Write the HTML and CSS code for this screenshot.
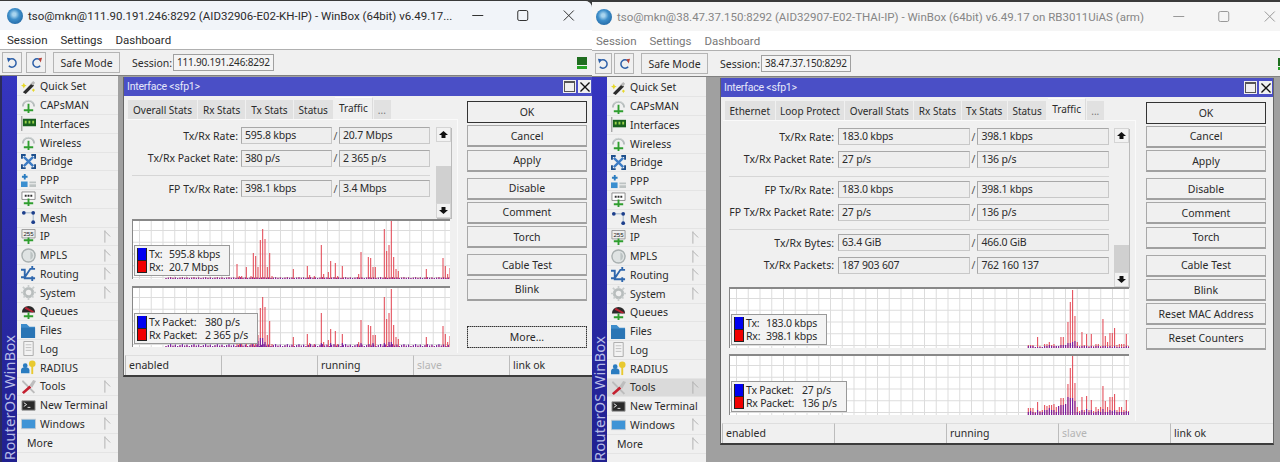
FILE: index.html
```html
<!DOCTYPE html>
<html lang="en">
<head>
  <meta charset="UTF-8">
  <title>WinBox - sfp1 traffic</title>
  <link rel="stylesheet" href="styles.css">
</head>
<body>
  <!-- icons used by both windows -->
  <svg class="defs" aria-hidden="true">
    <symbol id="i-quick" viewBox="0 0 16 16"><path d="M2 14 11 5l3 2-9 9z" fill="#2c2c2c"/><path d="M10 5l3-3 2 2-2 3z" fill="#b9b9b9"/><path d="M3 4l1 2 2 1-2 1-1 2-1-2-2-1 2-1zM13 10l1 1 1 1-1 .5-1 1.500-.5-1.500-1-.5 1-1z" fill="#e6d82a"/></symbol>
    <symbol id="i-wifi" viewBox="0 0 16 16"><path d="M2 9a6 6 0 0 1 12 0" fill="none" stroke="#b5bcbc" stroke-width="2"/><path d="M3 4.500a7 7 0 0 1 10 0" fill="none" stroke="#d5d9d9"/><path d="M7 6h2v6H7zM3 12h10v2H3zM7 11h2v5H7z" fill="#2f9e2f"/></symbol>
    <symbol id="i-iface" viewBox="0 0 16 16"><path d="M0 0h1.500v16H0z" fill="#a8a8a8"/><path d="M2 3h14v8H2z" fill="#17601d"/><path d="M4 5h2v3H4zM8 5h2v3H8zM12 5h2v3h-2z" fill="#9ad14a"/></symbol>
    <symbol id="i-bridge" viewBox="0 0 16 16"><path d="M3 3l10 10M13 3 3 13" stroke="#3d7cc4" stroke-width="2.500"/><path d="M0 0h5v2H2v3H0zM11 0h5v5h-2V2h-3zM0 11h2v3h3v2H0zM14 11h2v5h-5v-2h3z" fill="#1d4f8c"/></symbol>
    <symbol id="i-ppp" viewBox="0 0 16 16"><path d="M3 1h2v2h2v2H5v2H3V5H1V3h2z" fill="#2a7cc0"/><path d="M0 9h7v6H0z" fill="#3b8fd0"/><path d="M9 9h7v2H9zM9 12h7v3H9z" fill="#bdc3c3"/></symbol>
    <symbol id="i-switch" viewBox="0 0 16 16"><path d="M1 1h14v8H1z" fill="#fff" stroke="#8b8b8b"/><path d="M4 4h2v2H4zM7 4h2v2H7zM10 4h2v2h-2z" fill="#333"/><path d="M7 8h2v8H7zM3 12h10v2H3z" fill="#2f9e2f"/></symbol>
    <symbol id="i-mesh" viewBox="0 0 16 16"><path d="M3 3h10v10" fill="none" stroke="#9bb0c8"/><circle cx="3" cy="3" r="2" fill="#1d3f8c"/><circle cx="13" cy="3" r="2" fill="#1d3f8c"/><circle cx="13" cy="13" r="2" fill="#1d3f8c"/></symbol>
    <symbol id="i-ip" viewBox="0 0 16 16"><path d="M1 .500h14v9H1z" fill="#eee" stroke="#999"/><text x="8" y="7.500" font-size="6.500" font-family="Liberation Sans" text-anchor="middle" fill="#222">255</text><path d="M7 9h2v7H7zM3 11h10v2H3z" fill="#2f9e2f"/></symbol>
    <symbol id="i-mpls" viewBox="0 0 16 16"><circle cx="8" cy="8" r="7" fill="#dfe3e3" stroke="#a9b0b0" stroke-width="1.500"/><path d="M10 3.500a5 5 0 0 1 0 9z" fill="#bcc3c3"/></symbol>
    <symbol id="i-route" viewBox="0 0 16 16"><path d="M0 12h4l6-9h5M0 4h4v9h11M12 0v4M12 11v5" fill="none" stroke="#2f67ad" stroke-width="2"/></symbol>
    <symbol id="i-gear" viewBox="0 0 16 16"><circle cx="8" cy="8" r="4.500" fill="none" stroke="#b8bdbd" stroke-width="3"/><path d="M8 0v16M0 8h16M2 2l12 12M14 2 2 14" stroke="#c8cccc" stroke-width="1.800" stroke-dasharray="3 10"/></symbol>
    <symbol id="i-queue" viewBox="0 0 16 16"><path d="M1 9a7 7 0 0 1 14 0z" fill="#2a2a2a"/><path d="M5 3l9 5-2 1-8-4z" fill="#b82233"/><path d="M7 9h2v7H7zM3 12h10v2H3z" fill="#2f9e2f"/></symbol>
    <symbol id="i-files" viewBox="0 0 16 16"><path d="M0 1h6l3 3h6v12H0z" fill="#3d8ccb"/><path d="M0 5h15v11H0z" fill="#2a75b5"/></symbol>
    <symbol id="i-log" viewBox="0 0 16 16"><path d="M3 .500h10v15H3z" fill="#f3f3f3" stroke="#aaa"/><path d="M5 4h6M5 7h6M5 10h6" stroke="#c0c0c0"/></symbol>
    <symbol id="i-radius" viewBox="0 0 16 16"><circle cx="4.500" cy="6" r="2.500" fill="#2a7cc0"/><path d="M0 14v-3a4 3 0 0 1 9 0v3z" fill="#2a7cc0"/><circle cx="12" cy="4" r="3.500" fill="#e8c930"/><path d="M11 6h2v9h-2z" fill="#e8c930"/></symbol>
    <symbol id="i-tools" viewBox="0 0 16 16"><path d="M2 1 15 14l-1.500 1.500L1 3z" fill="#bbb"/><path d="M9 7l2 2-8 7-2-2z" fill="#c4202f"/><path d="M9 7l4-6 3 1-4 7z" fill="#bdbdbd"/></symbol>
    <symbol id="i-term" viewBox="0 0 16 16"><path d="M1 3h14v10H1z" fill="#2a2a2a" stroke="#999"/><path d="M3 5l3 2-3 2M7 10h3" fill="none" stroke="#eee"/></symbol>
    <symbol id="i-win" viewBox="0 0 16 16"><path d="M0 3h16v11H0z" fill="#c4ccd4"/><path d="M1 4h14v9H1z" fill="#3f94d6"/></symbol>
    <symbol id="i-sub" viewBox="0 0 8 14"><path d="M1 0v14M1 1l6 6" fill="none" stroke="#aaa"/></symbol>
    <symbol id="i-undo" viewBox="0 0 14 14"><path d="M3 4.500a4.500 4.500 0 1 1 0 6" fill="none" stroke="#2c5fa8" stroke-width="1.600"/><path d="M1 2l4 .5L2.500 7z" fill="#2c5fa8"/></symbol>
    <symbol id="i-redo" viewBox="0 0 14 14"><path d="M11 4.500a4.500 4.500 0 1 0 0 6" fill="none" stroke="#2c5fa8" stroke-width="1.600"/><path d="M13 2l-4 .5L11.500 7z" fill="#b8443a"/></symbol>
    <symbol id="i-up" viewBox="0 0 9 9"><path d="M4.500 1 9 5H6.500v3h-4V5H0z" fill="#111"/></symbol>
    <symbol id="i-down" viewBox="0 0 9 9"><path d="M4.500 8 9 4H6.500V1h-4v3H0z" fill="#111"/></symbol>
    <symbol id="i-min" viewBox="0 0 11 11"><path d="M0 5.500h11" stroke="currentColor"/></symbol>
    <symbol id="i-max" viewBox="0 0 11 11"><rect x=".5" y=".5" width="10" height="10" rx="1.500" fill="none" stroke="currentColor"/></symbol>
    <symbol id="i-close" viewBox="0 0 11 11"><path d="M.5.500l10 10M10.500.500l-10 10" stroke="currentColor"/></symbol>
  </svg>

  <main class="desktop">
    <!-- first router -->
    <section class="win win-a">
      <header class="titlebar">
        <span class="logo"></span>
        <span class="title">tso@mkn@111.90.191.246:8292 (AID32906-E02-KH-IP) - WinBox (64bit) v6.49.17...</span>
        <span class="ctrls">
          <svg class="ctrl"><use href="#i-min"/></svg>
          <svg class="ctrl"><use href="#i-max"/></svg>
          <svg class="ctrl"><use href="#i-close"/></svg>
        </span>
      </header>
      <nav class="menubar"><span>Session</span><span>Settings</span><span>Dashboard</span></nav>
      <div class="toolbar">
        <button class="tool"><svg class="tool-ic"><use href="#i-undo"/></svg></button>
        <button class="tool"><svg class="tool-ic"><use href="#i-redo"/></svg></button>
        <button class="tool safe">Safe Mode</button>
        <span class="sess-label">Session:</span>
        <span class="sess-val">111.90.191.246:8292</span>
        <span class="led"></span>
      </div>
      <div class="main">
        <aside class="side">
          <div class="brand"><span>RouterOS WinBox</span></div>
          <ul class="menu">
            <li><svg class="ic"><use href="#i-quick"/></svg>Quick Set</li>
            <li><svg class="ic"><use href="#i-wifi"/></svg>CAPsMAN</li>
            <li><svg class="ic"><use href="#i-iface"/></svg>Interfaces</li>
            <li><svg class="ic"><use href="#i-wifi"/></svg>Wireless</li>
            <li><svg class="ic"><use href="#i-bridge"/></svg>Bridge</li>
            <li><svg class="ic"><use href="#i-ppp"/></svg>PPP</li>
            <li><svg class="ic"><use href="#i-switch"/></svg>Switch</li>
            <li><svg class="ic"><use href="#i-mesh"/></svg>Mesh</li>
            <li><svg class="ic"><use href="#i-ip"/></svg>IP<svg class="sub"><use href="#i-sub"/></svg></li>
            <li><svg class="ic"><use href="#i-mpls"/></svg>MPLS<svg class="sub"><use href="#i-sub"/></svg></li>
            <li><svg class="ic"><use href="#i-route"/></svg>Routing<svg class="sub"><use href="#i-sub"/></svg></li>
            <li><svg class="ic"><use href="#i-gear"/></svg>System<svg class="sub"><use href="#i-sub"/></svg></li>
            <li><svg class="ic"><use href="#i-queue"/></svg>Queues</li>
            <li><svg class="ic"><use href="#i-files"/></svg>Files</li>
            <li><svg class="ic"><use href="#i-log"/></svg>Log</li>
            <li><svg class="ic"><use href="#i-radius"/></svg>RADIUS</li>
            <li><svg class="ic"><use href="#i-tools"/></svg>Tools<svg class="sub"><use href="#i-sub"/></svg></li>
            <li><svg class="ic"><use href="#i-term"/></svg>New Terminal</li>
            <li><svg class="ic"><use href="#i-win"/></svg>Windows<svg class="sub"><use href="#i-sub"/></svg></li>
            <li class="more">More<svg class="sub"><use href="#i-sub"/></svg></li>
          </ul>
        </aside>
        <div class="workspace">
          <div class="dialog">
            <div class="dlg-title">
              <span>Interface &lt;sfp1&gt;</span>
              <span class="dlg-btn"><i class="dlg-box"></i></span>
              <span class="dlg-btn"><svg class="dlg-x"><use href="#i-close"/></svg></span>
            </div>
            <div class="dlg-body">
              <div class="left">
                <div class="tabs">
                  <span class="tab">Overall Stats</span>
                  <span class="tab">Rx Stats</span>
                  <span class="tab">Tx Stats</span>
                  <span class="tab">Status</span>
                  <span class="tab active">Traffic</span>
                  <span class="tab dots">...</span>
                </div>
                <div class="panel">
                  <div class="stats">
                    <div class="fields">
                      <div class="row"><label>Tx/Rx Rate:</label><span class="val">595.8 kbps</span><span class="slash">/</span><span class="val">20.7 Mbps</span></div>
                      <div class="row"><label>Tx/Rx Packet Rate:</label><span class="val">380 p/s</span><span class="slash">/</span><span class="val">2 365 p/s</span></div>
                      <hr class="sep">
                      <div class="row"><label>FP Tx/Rx Rate:</label><span class="val">398.1 kbps</span><span class="slash">/</span><span class="val">3.4 Mbps</span></div>
                    </div>
                    <div class="scroll">
                      <span class="sb-btn"><svg class="sb-ic"><use href="#i-up"/></svg></span>
                      <span class="sb-track"></span>
                      <span class="sb-thumb"></span>
                      <span class="sb-btn"><svg class="sb-ic"><use href="#i-down"/></svg></span>
                    </div>
                  </div>
                  <div class="charts">
                    <div class="chart chart-top">
                      <svg class="plot" data-chart="a-rate"></svg>
                      <div class="legend">
                        <i class="sw tx"></i><span class="lg-name">Tx:</span><span>595.8 kbps</span>
                        <i class="sw rx"></i><span class="lg-name">Rx:</span><span>20.7 Mbps</span>
                      </div>
                    </div>
                    <div class="chart">
                      <svg class="plot" data-chart="a-pkt"></svg>
                      <div class="legend wide">
                        <i class="sw tx"></i><span class="lg-name">Tx Packet:</span><span>380 p/s</span>
                        <i class="sw rx"></i><span class="lg-name">Rx Packet:</span><span>2 365 p/s</span>
                      </div>
                    </div>
                  </div>
                </div>
              </div>
              <div class="actions">
                <button class="btn primary">OK</button>
                <button class="btn">Cancel</button>
                <button class="btn">Apply</button>
                <button class="btn group">Disable</button>
                <button class="btn">Comment</button>
                <button class="btn">Torch</button>
                <button class="btn group2">Cable Test</button>
                <button class="btn">Blink</button>
                <button class="btn focus">More...</button>
              </div>
            </div>
            <div class="status">
              <span>enabled</span><span></span><span>running</span><span class="off">slave</span><span>link ok</span>
            </div>
          </div>
        </div>
      </div>
    </section>

    <!-- second router, window not focused -->
    <section class="win win-b">
      <header class="titlebar">
        <span class="logo"></span>
        <span class="title">tso@mkn@38.47.37.150:8292 (AID32907-E02-THAI-IP) - WinBox (64bit) v6.49.17 on RB3011UiAS (arm)</span>
        <span class="ctrls">
          <svg class="ctrl"><use href="#i-min"/></svg>
          <svg class="ctrl"><use href="#i-max"/></svg>
          <svg class="ctrl"><use href="#i-close"/></svg>
        </span>
      </header>
      <nav class="menubar"><span>Session</span><span>Settings</span><span>Dashboard</span></nav>
      <div class="toolbar">
        <button class="tool"><svg class="tool-ic"><use href="#i-undo"/></svg></button>
        <button class="tool"><svg class="tool-ic"><use href="#i-redo"/></svg></button>
        <button class="tool safe">Safe Mode</button>
        <span class="sess-label">Session:</span>
        <span class="sess-val">38.47.37.150:8292</span>
        <span class="led"></span>
      </div>
      <div class="main">
        <aside class="side">
          <div class="brand"><span>RouterOS WinBox</span></div>
          <ul class="menu">
            <li><svg class="ic"><use href="#i-quick"/></svg>Quick Set</li>
            <li><svg class="ic"><use href="#i-wifi"/></svg>CAPsMAN</li>
            <li><svg class="ic"><use href="#i-iface"/></svg>Interfaces</li>
            <li><svg class="ic"><use href="#i-wifi"/></svg>Wireless</li>
            <li><svg class="ic"><use href="#i-bridge"/></svg>Bridge</li>
            <li><svg class="ic"><use href="#i-ppp"/></svg>PPP</li>
            <li><svg class="ic"><use href="#i-switch"/></svg>Switch</li>
            <li><svg class="ic"><use href="#i-mesh"/></svg>Mesh</li>
            <li><svg class="ic"><use href="#i-ip"/></svg>IP<svg class="sub"><use href="#i-sub"/></svg></li>
            <li><svg class="ic"><use href="#i-mpls"/></svg>MPLS<svg class="sub"><use href="#i-sub"/></svg></li>
            <li><svg class="ic"><use href="#i-route"/></svg>Routing<svg class="sub"><use href="#i-sub"/></svg></li>
            <li><svg class="ic"><use href="#i-gear"/></svg>System<svg class="sub"><use href="#i-sub"/></svg></li>
            <li><svg class="ic"><use href="#i-queue"/></svg>Queues</li>
            <li><svg class="ic"><use href="#i-files"/></svg>Files</li>
            <li><svg class="ic"><use href="#i-log"/></svg>Log</li>
            <li><svg class="ic"><use href="#i-radius"/></svg>RADIUS</li>
            <li class="hover"><svg class="ic"><use href="#i-tools"/></svg>Tools<svg class="sub"><use href="#i-sub"/></svg></li>
            <li><svg class="ic"><use href="#i-term"/></svg>New Terminal</li>
            <li><svg class="ic"><use href="#i-win"/></svg>Windows<svg class="sub"><use href="#i-sub"/></svg></li>
            <li class="more">More<svg class="sub"><use href="#i-sub"/></svg></li>
          </ul>
        </aside>
        <div class="workspace">
          <div class="dialog">
            <div class="dlg-title">
              <span>Interface &lt;sfp1&gt;</span>
              <span class="dlg-btn"><i class="dlg-box"></i></span>
              <span class="dlg-btn"><svg class="dlg-x"><use href="#i-close"/></svg></span>
            </div>
            <div class="dlg-body">
              <div class="left">
                <div class="tabs">
                  <span class="tab">Ethernet</span>
                  <span class="tab">Loop Protect</span>
                  <span class="tab">Overall Stats</span>
                  <span class="tab">Rx Stats</span>
                  <span class="tab">Tx Stats</span>
                  <span class="tab">Status</span>
                  <span class="tab active">Traffic</span>
                  <span class="tab dots">...</span>
                </div>
                <div class="panel">
                  <div class="stats">
                    <div class="fields">
                      <div class="row"><label>Tx/Rx Rate:</label><span class="val">183.0 kbps</span><span class="slash">/</span><span class="val">398.1 kbps</span></div>
                      <div class="row"><label>Tx/Rx Packet Rate:</label><span class="val">27 p/s</span><span class="slash">/</span><span class="val">136 p/s</span></div>
                      <hr class="sep">
                      <div class="row"><label>FP Tx/Rx Rate:</label><span class="val">183.0 kbps</span><span class="slash">/</span><span class="val">398.1 kbps</span></div>
                      <div class="row"><label>FP Tx/Rx Packet Rate:</label><span class="val">27 p/s</span><span class="slash">/</span><span class="val">136 p/s</span></div>
                      <hr class="sep">
                      <div class="row"><label>Tx/Rx Bytes:</label><span class="val">63.4 GiB</span><span class="slash">/</span><span class="val">466.0 GiB</span></div>
                      <div class="row"><label>Tx/Rx Packets:</label><span class="val">187 903 607</span><span class="slash">/</span><span class="val">762 160 137</span></div>
                    </div>
                    <div class="scroll">
                      <span class="sb-btn"><svg class="sb-ic"><use href="#i-up"/></svg></span>
                      <span class="sb-track"></span>
                      <span class="sb-thumb"></span>
                      <span class="sb-btn"><svg class="sb-ic"><use href="#i-down"/></svg></span>
                    </div>
                  </div>
                  <div class="charts">
                    <div class="chart chart-top">
                      <svg class="plot" data-chart="b-rate"></svg>
                      <div class="legend">
                        <i class="sw tx"></i><span class="lg-name">Tx:</span><span>183.0 kbps</span>
                        <i class="sw rx"></i><span class="lg-name">Rx:</span><span>398.1 kbps</span>
                      </div>
                    </div>
                    <div class="chart">
                      <svg class="plot" data-chart="b-pkt"></svg>
                      <div class="legend wide">
                        <i class="sw tx"></i><span class="lg-name">Tx Packet:</span><span>27 p/s</span>
                        <i class="sw rx"></i><span class="lg-name">Rx Packet:</span><span>136 p/s</span>
                      </div>
                    </div>
                  </div>
                </div>
              </div>
              <div class="actions">
                <button class="btn primary">OK</button>
                <button class="btn">Cancel</button>
                <button class="btn">Apply</button>
                <button class="btn group">Disable</button>
                <button class="btn">Comment</button>
                <button class="btn">Torch</button>
                <button class="btn group2">Cable Test</button>
                <button class="btn">Blink</button>
                <button class="btn">Reset MAC Address</button>
                <button class="btn">Reset Counters</button>
              </div>
            </div>
            <div class="status">
              <span>enabled</span><span></span><span>running</span><span class="off">slave</span><span>link ok</span>
            </div>
          </div>
        </div>
      </div>
    </section>
  </main>
  <script src="charts.js"></script>
</body>
</html>
```
FILE: styles.css
```css
* {
  box-sizing: border-box;
}

html, body {
  margin: 0;
  height: 100%;
  overflow: hidden;
}

body {
  background: #3a3a3a;
  font-family: "Noto Sans", "Liberation Sans", sans-serif;
  font-size: 10.5px;
  color: #2b2b2b;
}

.defs {
  position: absolute;
  width: 0;
  height: 0;
}

.desktop {
  display: flex;
  height: 462px;
  align-items: flex-start;
}

.win {
  height: 462px;
  overflow: hidden;
  display: flex;
  flex-direction: column;
  background: #f0f0f0;
}
.win-a {
  width: 592px;
  margin-top: 1px;
  border-top-right-radius: 7px;
}
.win-b {
  width: 688px;
  margin-top: 2px;
}

/* title bar */
.titlebar {
  height: 29px;
  flex: none;
  display: flex;
  align-items: center;
  background: #f1f4f9;
  font-family: Roboto, "Liberation Sans", sans-serif;
  font-size: 11.5px;
  white-space: nowrap;
}
.win-a .titlebar {
  padding-left: 7px;
}
.win-b .titlebar {
  padding-left: 4px;
  background: #f5f5f5;
  color: #868686;
}
.logo {
  width: 16px;
  height: 16px;
  border-radius: 50%;
  margin-right: 5px;
  flex: none;
  background: radial-gradient(circle at 45% 40%, #a8d4ee 0 12%, #3f8fca 40%, #1c5f9c 90%);
}
.ctrls {
  margin-left: auto;
  display: flex;
  flex: none;
  color: #333;
}
.win-a .ctrls {
  margin-right: 1px;
}
.win-b .ctrls {
  margin-right: -12px;
  color: #999;
}
.ctrl {
  width: 45.5px;
  height: 11px;
}

/* menu and tool bars */
.menubar {
  height: 20px;
  flex: none;
  display: flex;
  align-items: center;
  gap: 13px;
  padding-left: 7px;
  background: #fff;
  border-bottom: 1px solid #b0b0b0;
  font-family: Roboto, "Liberation Sans", sans-serif;
  font-size: 11.5px;
}
.win-b .menubar {
  padding-left: 4px;
  color: #777;
}

.toolbar {
  height: 26px;
  flex: none;
  display: flex;
  align-items: center;
  padding-left: 2px;
  border-bottom: 1px solid #808080;
  overflow: hidden;
}
.tool {
  height: 21px;
  width: 20px;
  padding: 0;
  margin-right: 4px;
  display: flex;
  align-items: center;
  justify-content: center;
  background: #f0f0f0;
  border: 1px solid #b4b4b4;
  font: inherit;
  color: inherit;
}
.win-b .tool:first-child {
  width: 17px;
  margin: 0 2px 0 1px;
}
.tool-ic {
  width: 13px;
  height: 13px;
}
.safe {
  width: 67px;
  margin-left: 3px;
}
.sess-label {
  margin-left: 8px;
  width: 41px;
}
.sess-val {
  height: 17px;
  padding: 0 3px;
  line-height: 15px;
  border: 1px solid #a0a0a0;
  background: #f4f4f4;
  white-space: nowrap;
  font-size: 10px;
  letter-spacing: -.2px;
}
.led {
  margin-left: auto;
  margin-right: 5px;
  width: 10px;
  height: 12px;
  background: linear-gradient(#1f6d1f 0 8px, #f0f0f0 8px 9px, #26a326 9px);
}
.win-b .led {
  margin-right: -8px;
}

.main {
  flex: 1;
  min-height: 0;
  display: flex;
}

/* left menu */
.side {
  flex: none;
  display: flex;
  background: #f0f0f0;
}
.brand {
  width: 17px;
  display: flex;
  align-items: flex-end;
  justify-content: center;
  padding: 0 0 3px;
  border-left: 2px solid #2b2b5c;
  background: linear-gradient(#3535c0, #20208f);
  color: #b6bce6;
}
.win-b .brand {
  width: 15px;
  border-left: 0;
}
.brand span {
  writing-mode: vertical-rl;
  transform: rotate(180deg);
  font-size: 15px;
  line-height: 15px;
  white-space: nowrap;
}
.menu {
  list-style: none;
  margin: 1.5px 0 0;
  padding: 0;
}
.win-a .menu {
  width: 101px;
}
.win-b .menu {
  width: 99px;
}
.menu li {
  height: 18.75px;
  display: flex;
  align-items: center;
  padding: 0 7px 0 4px;
  border-bottom: 1px solid #e4e4e4;
  white-space: nowrap;
}
.menu li.hover {
  background: #dadada;
}
.menu li.more {
  padding-left: 10px;
}
.ic {
  width: 15px;
  height: 15px;
  margin-right: 4px;
  flex: none;
}
.sub {
  width: 7px;
  height: 13px;
  margin-left: auto;
}

/* desktop area with the dialog */
.workspace {
  flex: 1;
  min-width: 0;
  padding-top: 1px;
  background: #a0a0a0;
}
.win-a .workspace {
  padding-left: 5px;
}
.win-b .workspace {
  padding-left: 14px;
  padding-right: 6px;
}
.dialog {
  display: flex;
  flex-direction: column;
  background: #f0f0f0;
  border-left: 1px solid #666;
  border-bottom: 2px solid #3c3c3c;
}
.win-b .dialog {
  border-right: 1px solid #666;
}
.dlg-title {
  height: 19px;
  display: flex;
  align-items: center;
  gap: 2px;
  padding: 0 1px 0 3px;
  background: #4a4fc6;
  color: #e6e8fa;
  font-family: Roboto, "Liberation Sans", sans-serif;
  letter-spacing: -.2px;
}
.dlg-title span:first-child {
  margin-right: auto;
}
.dlg-btn {
  width: 13px;
  height: 13px;
  display: flex;
  align-items: center;
  justify-content: center;
  background: #f0f0f0;
}
.dlg-box {
  width: 11px;
  height: 11px;
  border: 1px solid #555;
  border-top-width: 2px;
}
.dlg-x {
  width: 10px;
  height: 10px;
  color: #111;
  stroke-width: 1.500;
}

.dlg-body {
  display: flex;
  gap: 9px;
  padding: 4px 0 0 2px;
}
.win-b .dlg-body {
  gap: 10px;
}

/* tabs */
.tabs {
  height: 19px;
  display: flex;
  gap: 1px;
  margin-left: 2px;
  font-size: 10px;
}
.tab {
  padding: 0 5px;
  line-height: 20px;
  background: #e1e1e1;
  white-space: nowrap;
}
.win-b .tab {
  padding: 0 4.5px;
}
.tab.active,
.win-b .tab.active {
  width: 38px;
  height: 22px;
  margin: -3px 0 0 1px;
  padding: 0;
  text-align: center;
  line-height: 21px;
  background: #f0f0f0;
  border-top: 1px solid #fbfbfb;
  border-right: 1px solid #dcdcdc;
}
.tab.dots {
  width: 17px;
  padding: 0 4px;
  color: #777;
}

/* stats panel */
.panel {
  padding: 7px 6px 6px;
  border-top: 1px solid #fafafa;
  border-right: 1px solid #fafafa;
}
.win-a .panel {
  width: 332px;
}
.win-b .panel {
  width: 413px;
}
.stats {
  display: flex;
  margin-bottom: 1px;
}
.win-b .stats {
  margin-bottom: 0;
}
.fields {
  flex: 1;
  min-width: 0;
}
.row {
  height: 17px;
  display: flex;
  align-items: center;
  margin-bottom: 5.5px;
}
.row label {
  flex: none;
  text-align: right;
  white-space: nowrap;
}
.win-a .row label {
  width: 106px;
  margin-right: 3px;
}
.win-b .row label {
  width: 105px;
  margin-right: 4px;
}
.val {
  height: 17px;
  padding-left: 3px;
  line-height: 15px;
  border: 1px solid #a8a8a8;
  border-right-color: #c8c8c8;
  border-bottom-color: #c8c8c8;
  background: #eee;
  letter-spacing: -.2px;
}
.win-a .val {
  width: 91px;
}
.win-b .val {
  width: 132px;
}
.slash {
  text-align: center;
  color: #555;
}
.win-a .slash {
  width: 7px;
}
.win-b .slash {
  width: 8px;
}
.sep {
  height: 1px;
  margin: 8.5px 0 4px;
  border: 0;
  background: #d6d6d6;
}

.scroll {
  flex: none;
  width: 15px;
  display: flex;
  flex-direction: column;
  box-shadow: 1px 1px 0 #bbb;
}
.win-a .scroll {
  height: 91px;
  margin-left: 6px;
}
.win-b .scroll {
  height: 159px;
  margin-left: 5px;
}
.sb-btn {
  height: 15px;
  display: flex;
  align-items: center;
  justify-content: center;
  background: #f2f2f2;
  border: 1px solid #d4d4d4;
}
.sb-ic {
  width: 9px;
  height: 9px;
}
.sb-track {
  flex: 1;
  background: #f0f0f0;
}
.sb-thumb {
  background: #d0d0d0;
}
.win-a .sb-thumb {
  height: 37px;
}
.win-b .sb-thumb {
  height: 27px;
}

/* charts */
.charts {
  display: flex;
  flex-direction: column;
}
.win-a .charts {
  width: 318px;
  gap: 7px;
}
.win-b .charts {
  width: 400px;
  gap: 6px;
}
.chart {
  position: relative;
  height: 61px;
  border-top: 2px solid #888;
  border-left: 1px solid #888;
  background-color: #fff;
  background-image: linear-gradient(#dcdcdc 1px, transparent 1px), linear-gradient(90deg, #dcdcdc 1px, transparent 1px);
  background-size: 11.75px 11.75px;
  background-position: 6px 9px;
}
.win-a .chart-top {
  height: 60px;
}
.plot {
  display: block;
  width: 100%;
  height: 100%;
}
.legend {
  position: absolute;
  left: 1px;
  bottom: 3px;
  display: grid;
  grid-template-columns: 10px 18px auto;
  grid-auto-rows: 12.5px;
  column-gap: 2px;
  align-items: center;
  padding: 2px 9px 2px 2px;
  background: #f3f3f3;
  border: 1px solid #999;
  line-height: 12px;
  white-space: nowrap;
  letter-spacing: -.2px;
}
.legend.wide {
  grid-template-columns: 10px 54px auto;
}
.sw {
  height: 12.5px;
  border: 1px solid #222;
  border-top: 0;
}
.sw.tx {
  background: #0000f0;
}
.sw.rx {
  background: #f00000;
}

/* buttons on the right */
.actions {
  width: 120px;
  flex: none;
  display: flex;
  flex-direction: column;
  gap: 2.33px;
  padding-top: 1px;
}
.win-b .actions {
  padding-top: .5px;
}
.btn {
  height: 22px;
  padding: 0;
  background: #f0f0f0;
  border: 1px solid #a8a8a8;
  border-bottom: 2px solid #a0a0a0;
  font: inherit;
  color: inherit;
}
.btn.primary {
  border: 1px solid #333;
}
.btn.group {
  margin-top: 3.67px;
}
.btn.group2 {
  margin-top: 3.67px;
}
.btn.focus {
  margin-top: 22.67px;
  border: 1px solid #999;
  outline: 1px dotted #333;
  outline-offset: -1px;
}

/* status line */
.status {
  height: 20px;
  margin-top: 2px;
  display: grid;
  padding-left: 1px;
}
.win-a .status {
  grid-template-columns: repeat(4, 96px) 1fr;
}
.win-b .status {
  grid-template-columns: repeat(4, 112px) 1fr;
}
.status span {
  padding-left: 3px;
  line-height: 19px;
  border-left: 1px solid #bcbcbc;
  border-top: 1px solid #dedede;
}
.status .off {
  color: #b4b4b4;
}
```
FILE: charts.js
```js
// heights of the traffic bars, read off the graphs. x is from the left of the graph
const RED = "#e2404e";
const PURPLE = "#6a18a8";

const aPeaks = [[104,15],[106.3,3],[108.7,3],[113.3,12],[118,3],[120.3,26],[122.7,23],[125,12],[127.3,39],[129.7,50],[132,40],[134.3,12],[136.7,26],[139,3],[160.3,10],[174.3,13],[176.7,4],[181.3,3],[188.3,34],[190.7,5],[195.3,7],[197.7,18],[202.3,16],[204.7,3],[209.3,13],[225.7,5],[228,27],[235.3,22],[237.7,21],[240,12],[242.3,12],[251.3,50],[253.7,28],[256,34],[258.3,58],[260.7,22],[263,10],[265.3,8],[293.3,10],[310,21],[312.3,13],[314.7,5],[317,11]];
const aPktTx = [[125,6],[127.3,9],[129.7,9],[132,5],[188.3,4],[197.7,4],[209.3,4],[228,4],[240,4],[251.3,4],[256,5],[258.3,5]];

const bRate = [3,3,3,1,11,2,1,4,4,6,3,4,2,2,11,11,3,26,46,58,32,6,2,16,3,14,2,14,2,4,4,2,29,12,6,15,15,20,3,4,4,4,14,2];
const bRateTx = [2,2,2,1,1,1,1,2,2,3,2,2,2,2,3,3,3,5,5,6,7,2,1,2,2,2,1,2,1,2,2,1,2,2,1,2,1,2,1,1,1,1,2,1];
const bPkt = [7,7,7,3,13,4,5,10,9,10,10,11,8,9,17,17,11,31,47,59,32,8,4,18,5,19,5,15,4,8,6,8,29,14,8,18,18,21,5,8,8,5,15,4];
const bPktTx = [3,4,3,2,5,3,3,5,5,7,5,5,3,9,10,10,11,18,17,17,14,3,2,5,3,6,3,5,2,3,4,3,6,3,3,5,4,5,3,3,3,3,4,3];

function noise(from, to, high) {
  let bars = [];
  let i = 0;
  for (let x = from; x < to; x += 2.333) {
    bars.push([x, 1 + (i * 7 % 5) * high / 4]);
    i++;
  }
  return bars;
}

function series(values) {
  return values.map((h, i) => [298.3 + i * 2.333, h]);
}

function addBars(svg, bars, color) {
  const base = svg.clientHeight;
  let d = "";
  bars.forEach(([x, h]) => {
    d += "M" + x + " " + base + "v" + (-h);
  });
  const path = document.createElementNS("http://www.w3.org/2000/svg", "path");
  path.setAttribute("d", d);
  path.setAttribute("stroke", color);
  path.setAttribute("fill", "none");
  svg.appendChild(path);
}

const charts = {
  "a-rate": [[noise(33, 318, 1), RED], [aPeaks, RED], [noise(33, 318, .5), PURPLE]],
  "a-pkt": [[noise(33, 318, 1), RED], [aPeaks, RED], [noise(33, 318, 2), PURPLE], [aPktTx, PURPLE]],
  "b-rate": [[series(bRate), RED], [series(bRateTx), PURPLE]],
  "b-pkt": [[series(bPkt), RED], [series(bPktTx), PURPLE]]
};

document.querySelectorAll(".plot").forEach((svg) => {
  charts[svg.dataset.chart].forEach(([bars, color]) => addBars(svg, bars, color));
});
```
